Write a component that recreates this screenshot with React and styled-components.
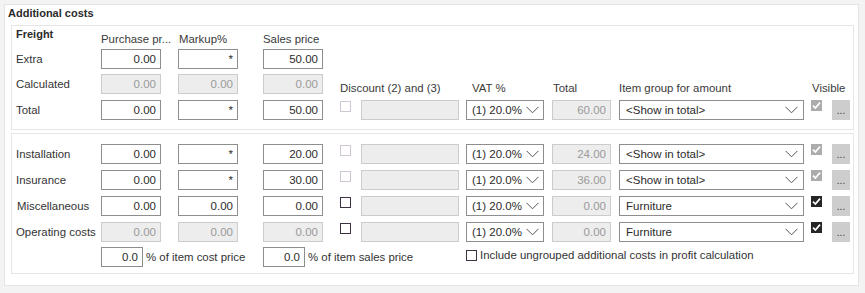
import React from "react";
import styled, { createGlobalStyle } from "styled-components";

const Global = createGlobalStyle`
  html, body { margin: 0; padding: 0; background: #f3f3f3; }
  body {
    font-family: "Liberation Sans", Arial, sans-serif;
    font-size: 11.4px;
    line-height: 14px;
    color: #333;
  }
`;

const COLS = "85px 77px 85px 77px 21px 105px 86px 67px 192px 21px 18px";

const Page = styled.div`
  padding: 4px;
`;

const Panel = styled.section`
  width: 855px;
  height: 282px;
  box-sizing: border-box;
  background: #fff;
  border: 1px solid #e4e4e4;
  padding: 0 4px 11px 3px;
  display: flex;
  flex-direction: column;
`;

const Title = styled.h2`
  margin: 0;
  height: 20px;
  box-sizing: border-box;
  padding-top: 1px;
  font-size: 11px;
  line-height: 14px;
  font-weight: bold;
  color: #2b2b2b;
`;

const Group = styled.div`
  margin: ${(p) => p.$mt || 0}px 0 0 3px;
  height: ${(p) => p.$h}px;
  box-sizing: border-box;
  border: 1px solid #e6e6e6;
  padding: ${(p) => p.$pt}px 0 0 4px;
  display: grid;
  grid-template-columns: ${COLS};
  grid-template-rows: ${(p) => p.$rows};
  align-items: start;
  justify-items: start;
`;

const RowLabel = styled.div`
  grid-column: 1;
  height: 20px;
  display: flex;
  align-items: center;
  white-space: nowrap;
  padding-left: ${(p) => p.$pl || 0}px;
  color: #333;
`;

const SectionLabel = styled.div`
  grid-column: 1;
  margin-top: 1px;
  font-size: 11px;
  font-weight: bold;
  color: #2b2b2b;
`;

const ColHead = styled.div`
  grid-column: ${(p) => p.$col};
  margin-top: ${(p) => p.$mt}px;
  margin-left: ${(p) => p.$ml || 0}px;
  white-space: nowrap;
  color: #3a3a3a;
`;

const NumField = styled.input`
  grid-column: ${(p) => p.$col || "auto"};
  width: ${(p) => p.$w || 60}px;
  height: 20px;
  box-sizing: border-box;
  margin: 0;
  padding: 0 4px 0 2px;
  border: 1px solid ${(p) => (p.disabled ? "#cccccc" : "#8e8e8e")};
  background: ${(p) => (p.disabled ? "#ededed" : "#fff")};
  color: ${(p) => (p.disabled ? "#9a9a9a" : "#2b2b2b")};
  font-family: "Liberation Sans", Arial, sans-serif;
  font-size: 11.5px;
  text-align: right;
  outline: none;
  -webkit-text-fill-color: ${(p) => (p.disabled ? "#9a9a9a" : "#2b2b2b")};
  opacity: 1;
`;

const CheckBox = styled.span`
  grid-column: ${(p) => p.$col || "auto"};
  margin-top: ${(p) => p.$mt || 0}px;
  width: 11px;
  height: 11px;
  box-sizing: border-box;
  flex: none;
  border: 1px solid
    ${(p) =>
      p.$checked
        ? p.$disabled
          ? "#acacac"
          : "#262626"
        : p.$disabled
        ? "#cfc5d4"
        : "#3e3143"};
  background: ${(p) =>
    p.$checked ? (p.$disabled ? "#acacac" : "#262626") : "#fff"};
  display: flex;
  align-items: center;
  justify-content: center;
`;

const SelectBox = styled.div`
  grid-column: ${(p) => p.$col};
  width: ${(p) => p.$w}px;
  height: 20px;
  box-sizing: border-box;
  border: 1px solid #8e8e8e;
  background: #fff;
  display: flex;
  align-items: center;
  justify-content: space-between;
  padding: 0 ${(p) => p.$pr}px 0 ${(p) => p.$pl}px;
  color: #2b2b2b;
  font-size: 11.5px;
  white-space: nowrap;
`;

const More = styled.button`
  grid-column: 11;
  width: 18px;
  height: 20px;
  box-sizing: border-box;
  margin: 0;
  padding: 0 0 4px 0;
  border: 0;
  background: #cdcdcd;
  color: #3a3a3a;
  font-family: "Liberation Sans", Arial, sans-serif;
  font-size: 10px;
  line-height: 10px;
  display: flex;
  align-items: flex-end;
  justify-content: center;
`;

const Inline = styled.div`
  grid-column: ${(p) => p.$col};
  margin-top: ${(p) => p.$mt || 0}px;
  display: flex;
  align-items: center;
  gap: 3px;
  white-space: nowrap;
`;

const Note = styled.span`
  color: #333;
  padding-bottom: ${(p) => p.$pb || 0}px;
`;

const Chevron = () => (
  <svg width="13" height="8" viewBox="0 0 13 8" aria-hidden="true">
    <polyline
      points="0.5,0.8 6.5,6.8 12.5,0.8"
      fill="none"
      stroke="#555"
      strokeWidth="1"
    />
  </svg>
);

const Tick = () => (
  <svg width="9" height="9" viewBox="0 0 9 9" aria-hidden="true">
    <polyline
      points="1,4.6 3.4,7 8,1.6"
      fill="none"
      stroke="#fff"
      strokeWidth="1.7"
    />
  </svg>
);

const Check = ({ checked, disabled, col, mt }) => (
  <CheckBox $checked={checked} $disabled={disabled} $col={col} $mt={mt}>
    {checked && <Tick />}
  </CheckBox>
);

const Select = ({ col, w, pl, pr, children }) => (
  <SelectBox $col={col} $w={w} $pl={pl} $pr={pr}>
    <span>{children}</span>
    <Chevron />
  </SelectBox>
);

const Field = ({ value, disabled, col, w }) => (
  <NumField
    $col={col}
    $w={w}
    readOnly
    disabled={disabled}
    value={value}
    onChange={() => {}}
  />
);

const costRows = [
  { label: "Installation", p: "0.00", m: "*", s: "20.00", disc: "off", total: "24.00", group: "<Show in total>", vis: "dis" },
  { label: "Insurance", p: "0.00", m: "*", s: "30.00", disc: "off", total: "36.00", group: "<Show in total>", vis: "dis" },
  { label: "Miscellaneous", p: "0.00", m: "0.00", s: "0.00", disc: "on", total: "0.00", group: "Furniture", vis: "on", pl: 1 },
  { label: "Operating costs", p: "0.00", m: "0.00", s: "0.00", disc: "on", total: "0.00", group: "Furniture", vis: "on", locked: true },
];

const TailCells = ({ disc, total, group, vis }) => (
  <>
    <Check col={5} disabled={disc === "off"} mt={1} />
    <Field col={6} w={98} value="" disabled />
    <Select col={7} w={78} pl={5} pr={4}>(1) 20.0%</Select>
    <Field col={8} w={59} value={total} disabled />
    <Select col={9} w={185} pl={6} pr={5}>{group}</Select>
    <Check col={10} checked disabled={vis === "dis"} />
    <More type="button">...</More>
  </>
);

export default function App() {
  return (
    <Page>
      <Global />
      <Panel>
        <Title>Additional costs</Title>

        <Group $h={105} $pt={0} $rows="23px 25px 26px 20px">
          <SectionLabel>Freight</SectionLabel>
          <ColHead $col={2} $mt={6}>Purchase pr...</ColHead>
          <ColHead $col={3} $mt={6} $ml={1}>Markup%</ColHead>
          <ColHead $col={4} $mt={6}>Sales price</ColHead>

          <RowLabel>Extra</RowLabel>
          <Field col={2} value="0.00" />
          <Field col={3} value="*" />
          <Field col={4} value="50.00" />

          <RowLabel>Calculated</RowLabel>
          <Field col={2} value="0.00" disabled />
          <Field col={3} value="0.00" disabled />
          <Field col={4} value="0.00" disabled />
          <ColHead $col="5 / span 2" $mt={7}>Discount (2) and (3)</ColHead>
          <ColHead $col={7} $mt={7} $ml={6}>VAT %</ColHead>
          <ColHead $col={8} $mt={7} $ml={1}>Total</ColHead>
          <ColHead $col={9} $mt={7}>Item group for amount</ColHead>
          <ColHead $col="10 / span 2" $mt={7} $ml={1}>Visible</ColHead>

          <RowLabel>Total</RowLabel>
          <Field col={2} value="0.00" />
          <Field col={3} value="*" />
          <Field col={4} value="50.00" />
          <TailCells disc="off" total="60.00" group="<Show in total>" vis="dis" />
        </Group>

        <Group $h={141} $pt={10} $mt={3} $rows="26px 26px 26px 25px 20px">
          {costRows.map((r) => (
            <React.Fragment key={r.label}>
              <RowLabel $pl={r.pl}>{r.label}</RowLabel>
              <Field col={2} value={r.p} disabled={r.locked} />
              <Field col={3} value={r.m} disabled={r.locked} />
              <Field col={4} value={r.s} disabled={r.locked} />
              <TailCells disc={r.disc} total={r.total} group={r.group} vis={r.vis} />
            </React.Fragment>
          ))}

          <Inline $col="2 / span 2">
            <Field w={42} value="0.0" />
            <Note>% of item cost price</Note>
          </Inline>
          <Inline $col="4 / span 3">
            <Field w={42} value="0.0" />
            <Note>% of item sales price</Note>
          </Inline>
          <Inline $col="7 / span 5" $mt={1}>
            <Check />
            <Note $pb={1}>Include ungrouped additional costs in profit calculation</Note>
          </Inline>
        </Group>
      </Panel>
    </Page>
  );
}
